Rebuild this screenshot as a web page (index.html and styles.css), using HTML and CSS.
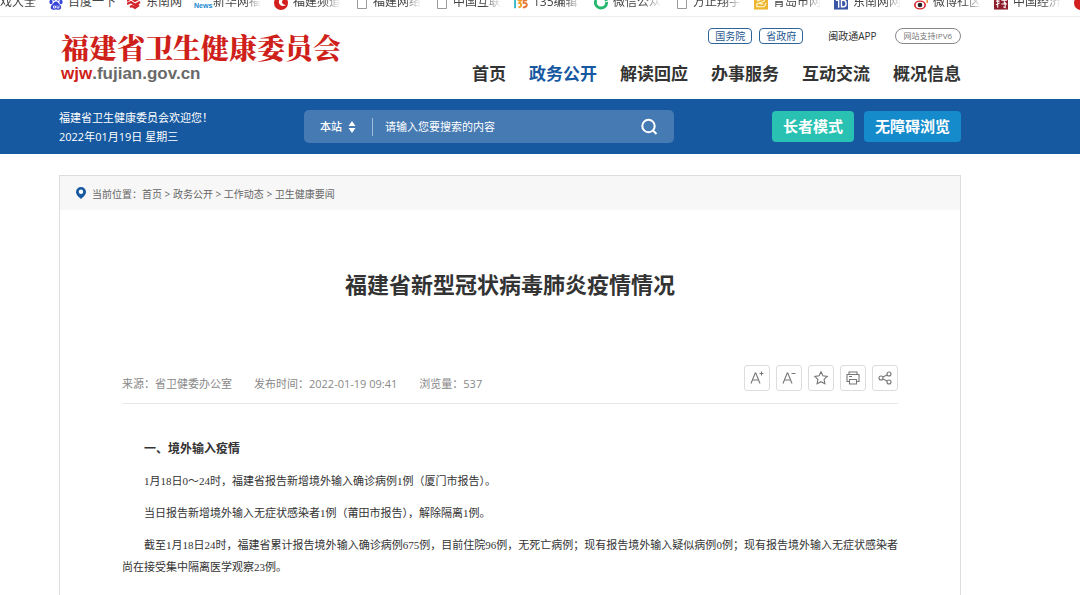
FILE: index.html
```html
<!DOCTYPE html>
<html lang="zh-CN">
<head>
<meta charset="utf-8">
<title>福建省新型冠状病毒肺炎疫情情况</title>
<link rel="stylesheet" href="styles.css">
</head>
<body>
<nav class="bookmarks" aria-label="书签">
  <a class="bm bm-first" href="#"><span>戏大全</span></a>
  <a class="bm bm-baidu" href="#"><svg viewBox="0 0 14 14"><g fill="#3a45d8"><ellipse cx="2" cy="6" rx="1.6" ry="2.2"/><ellipse cx="5" cy="2.6" rx="1.6" ry="2.2"/><ellipse cx="9" cy="2.6" rx="1.6" ry="2.2"/><ellipse cx="12" cy="6" rx="1.6" ry="2.2"/><path d="M7 5.500c2 0 2.500 2 4 3.300 2 1.700 1.500 5-1.200 5-1.300 0-1.800-.4-2.800-.4s-1.500.4-2.800.4C1.500 13.800 1 10.500 3 8.800 4.500 7.500 5 5.500 7 5.500z"/></g><path d="M4.500 10h2v2h-2zM8 9.500v2.500h2V9.500" fill="none" stroke="#fff" stroke-width=".8"/></svg><span>百度一下</span></a>
  <a class="bm bm-short" href="#"><svg viewBox="0 0 14 14" fill="none" stroke="#d3242b" stroke-width="2.200"><path d="M0 5l4-3 4 3 5-3M0 8l4-2 4 3 5-3M3 11l2-1 3 2 4-3"/></svg><span>东南网</span></a>
  <a class="bm" href="#"><svg class="news" viewBox="0 0 16 14"><text x="0" y="12">News</text></svg><span>新华网福</span></a>
  <a class="bm" href="#"><svg viewBox="0 0 14 14"><circle cx="7" cy="7" r="7" fill="#d3201f"/><path d="M12 2C7 1 4 4 5 7s4 4 7 2c-2 0-4-1-4-3s2-3 4-4z" fill="#fff"/></svg><span>福建频道</span></a>
  <a class="bm" href="#"><svg viewBox="0 0 14 14"><path d="M3.500.5h6l3 3v9h-9zM9.500.5v3h3" fill="#fff" stroke="#999"/></svg><span>福建网络</span></a>
  <a class="bm" href="#"><svg viewBox="0 0 14 14"><path d="M3.500.5h6l3 3v9h-9zM9.500.5v3h3" fill="#fff" stroke="#999"/></svg><span>中国互联</span></a>
  <a class="bm" href="#"><svg viewBox="0 0 16 14" fill="none" stroke-width="2.200"><path d="M1.200 2v11" stroke="#35b9c9"/><path d="M4 4h4L6 7c3 0 3 5-1 5" stroke="#efa32d"/><path d="M15 4h-4v3c5-1 5 5-1 5" stroke="#e5793b"/></svg><span>135编辑</span></a>
  <a class="bm" href="#"><svg viewBox="0 0 14 14" fill="none" stroke="#23b86c" stroke-width="2.800"><path d="M2 4c-2 4 1 8 5 8s6-3 5.500-6M3.500 2.500C7 0 11 1 12.500 5"/></svg><span>微信公众</span></a>
  <a class="bm" href="#"><svg viewBox="0 0 14 14"><path d="M3.500.5h6l3 3v9h-9zM9.500.5v3h3" fill="#fff" stroke="#999"/></svg><span>方正翔宇</span></a>
  <a class="bm" href="#"><svg viewBox="0 0 15 14"><path d="M0 0h15v14H0z" fill="#edb52d"/><path d="M3 5l8-3v3L3 8v3h8l2-4M6 8h4" fill="none" stroke="#fff6d5" stroke-width="1.200"/></svg><span>青岛市网</span></a>
  <a class="bm" href="#"><svg viewBox="0 0 15 14"><path d="M0 0h15v14H0z" fill="#3955a5"/><path d="M2 4h3v8M8 4v7h2c4 0 4-7 0-7z" fill="none" stroke="#fff" stroke-width="1.500"/></svg><span>东南网网</span></a>
  <a class="bm" href="#"><svg viewBox="0 0 14 14"><ellipse cx="6" cy="9" rx="6" ry="4.600" fill="#d9272d"/><ellipse cx="6" cy="9" rx="4.300" ry="3.300" fill="#fff"/><circle cx="6" cy="9" r="2.300" fill="#222"/><path d="M9 2c3-1 5 2 4 5" fill="none" stroke="#eb8c2c" stroke-width="1.500"/></svg><span>微博社区</span></a>
  <a class="bm" href="#"><svg viewBox="0 0 15 14"><path d="M0 0h15v14H0z" fill="#8d1c2c"/><path d="M2 5h4M4 2v10M2 9l4-2M8 4h6M11 2v6M8 8h6M12 6v6l-2-1" fill="none" stroke="#fff" stroke-width="1.100"/></svg><span>中国经济</span></a>
  <a class="bm" href="#" aria-label="书签"><svg viewBox="0 0 14 14"><circle cx="7" cy="7" r="7" fill="#d3201f"/><path d="M7 3l4 4-4 4" fill="none" stroke="#fff" stroke-width="2"/></svg></a>
</nav>

<header class="header wrap">
  <a class="logo" href="#"><span class="logo-name">福建省卫生健康委员会</span><span class="logo-url"><b>wjw</b>.fujian.gov.cn</span></a>
  <div class="header-side">
    <div class="quick">
      <a class="tag" href="#">国务院</a>
      <a class="tag" href="#">省政府</a>
      <a class="app" href="#">闽政通APP</a>
      <a class="ipv6" href="#">网站支持IPV6</a>
    </div>
    <nav class="menu" aria-label="主导航">
      <a href="#">首页</a><a class="active" href="#">政务公开</a><a href="#">解读回应</a><a href="#">办事服务</a><a href="#">互动交流</a><a href="#">概况信息</a>
    </nav>
  </div>
</header>

<div class="band wrap">
  <div class="welcome">福建省卫生健康委员会欢迎您！<br>2022年01月19日 星期三</div>
  <form class="search">
    <select class="scope" aria-label="搜索范围"><option>本站</option></select>
    <svg class="sort" viewBox="0 0 8 12" fill="#fff"><path d="M4 0l3.500 5h-7zM4 12L.5 7h7z"/></svg>
    <input class="keyword" type="text" placeholder="请输入您要搜索的内容" aria-label="搜索内容">
    <button class="go" type="button" aria-label="搜索"><svg viewBox="0 0 18 18" fill="none" stroke="#fff" stroke-width="2"><circle cx="8.500" cy="8" r="6.200"/><path d="M13 12.500l3.500 3.500"/></svg></button>
  </form>
  <div class="modes">
    <button class="mode elder" type="button">长者模式</button>
    <button class="mode access" type="button">无障碍浏览</button>
  </div>
</div>

<main class="main wrap">
  <div class="panel">
    <nav class="crumbs" aria-label="当前位置">
      <svg viewBox="0 0 10 12"><path d="M5 0a5 5 0 0 1 5 5c0 3-3 5-5 7-2-2-5-4-5-7a5 5 0 0 1 5-5z" fill="#1659a0"/><circle cx="5" cy="4.800" r="2.200" fill="#fff"/></svg>
      <span>当前位置：<a href="#">首页</a> &gt; <a href="#">政务公开</a> &gt; <a href="#">工作动态</a> &gt; <a href="#">卫生健康要闻</a></span>
    </nav>
    <article class="article">
      <h1>福建省新型冠状病毒肺炎疫情情况</h1>
      <div class="info">
        <div class="meta"><span>来源：省卫健委办公室</span><span>发布时间：2022-01-19 09:41</span><span>浏览量：537</span></div>
        <div class="tools">
          <button type="button" aria-label="放大字体"><svg viewBox="0 0 18 18"><path d="M3 14.500L7.200 4h.6L12 14.500M4.500 11h6M11.500 4.500h4M13.500 2.500v4"/></svg></button>
          <button type="button" aria-label="缩小字体"><svg viewBox="0 0 18 18"><path d="M3 14.500L7.200 4h.6L12 14.500M4.500 11h6M11.500 4.500h4"/></svg></button>
          <button type="button" aria-label="收藏"><svg viewBox="0 0 18 18"><path d="M9 2.800l1.900 4 4.300.6-3.100 3 .8 4.400L9 12.700l-3.900 2.100.8-4.400-3.100-3 4.300-.6z"/></svg></button>
          <button type="button" aria-label="打印"><svg viewBox="0 0 18 18"><path d="M5 5.500V3h8v2.500M5 12.500H3v-7h12v7h-2M5.500 10.500h7V15h-7zM5 7.500h3"/></svg></button>
          <button type="button" aria-label="分享"><svg viewBox="0 0 18 18"><circle cx="5" cy="9" r="2"/><circle cx="13" cy="5" r="2"/><circle cx="13" cy="13" r="2"/><path d="M7 8l4-2M7 10l4 2"/></svg></button>
        </div>
      </div>
      <div class="content">
        <h2>一、境外输入疫情</h2>
        <p>1月18日0～24时，福建省报告新增境外输入确诊病例1例（厦门市报告）。</p>
        <p>当日报告新增境外输入无症状感染者1例（莆田市报告），解除隔离1例。</p>
        <p>截至1月18日24时，福建省累计报告境外输入确诊病例675例，目前住院96例，无死亡病例；现有报告境外输入疑似病例0例；现有报告境外输入无症状感染者尚在接受集中隔离医学观察23例。</p>
      </div>
    </article>
  </div>
</main>
</body>
</html>
```
FILE: styles.css
```css
* { box-sizing: border-box; }
body {
  margin: 0;
  min-height: 100vh;
  display: flex;
  flex-direction: column;
  background: #fff;
  color: #333;
  font-family: "Open Sans", "Noto Sans CJK SC", sans-serif;
  font-size: 11px;
  overflow-x: hidden;
}
a { color: inherit; text-decoration: none; }
button, input, select { font: inherit; color: inherit; border: 0; background: none; padding: 0; margin: 0; }
svg { display: block; flex: none; }
.wrap { padding-left: 59px; padding-right: 119px; }

.bookmarks {
  display: flex;
  align-items: flex-end;
  height: 17px;
  padding-bottom: 6px;
  border-bottom: 1px solid #eee;
  overflow: hidden;
}
.bm { display: flex; align-items: flex-end; gap: 5px; flex: none; width: 80px; font-size: 12px; line-height: 16px; color: #444; }
.bm svg { width: 14px; height: 14px; }
.bm span {
  width: 48px;
  overflow: hidden;
  white-space: nowrap;
  -webkit-mask-image: linear-gradient(to right, #000 65%, transparent);
  mask-image: linear-gradient(to right, #000 65%, transparent);
}
.bm-first { width: 49px; }
.bm-baidu { width: 78px; }
.bm-baidu span, .bm-short span { -webkit-mask-image: none; mask-image: none; }
.bm-short { width: 67px; }
.bm .news { width: 16px; margin-right: -2px; overflow: visible; }
.news text { font: bold 7px "Liberation Sans", sans-serif; fill: #1586cf; }

.header { display: flex; justify-content: space-between; min-height: 82px; }
.logo { padding-top: 12px; padding-left: 2px; }
.logo-name { display: block; font: 900 28px/36px "Noto Serif CJK SC", "Noto Sans CJK SC", serif; color: #cf1f1a; }
.logo-url { display: block; font: bold 17px/18px "Liberation Sans", sans-serif; color: #6a6a6a; }
.logo-url b { color: #cf1f1a; }
.header-side { display: flex; flex-direction: column; align-items: flex-end; padding-top: 11px; }
.quick { display: flex; align-items: center; font-size: 10px; line-height: 14px; }
.tag { padding: 0 6px; border: 1px solid #2d6499; border-radius: 4px; color: #1c568f; margin-right: 7px; }
.app { margin: 0 18px; }
.ipv6 { padding: 0 8px; border: 1px solid #888; border-radius: 8px; font-size: 8px; color: #777; }
.menu { display: flex; gap: 23px; padding-top: 18px; font-size: 17px; line-height: 24px; font-weight: 700; }
.menu .active { color: #1659a0; }

.band { display: flex; align-items: center; min-height: 55px; background: #1659a0; color: #fff; }
.welcome { flex: none; width: 245px; line-height: 19px; }
.search { display: flex; align-items: center; flex: 0 1 370px; height: 33px; padding: 0 16px; border-radius: 5px; background: #467ab3; }
.scope { appearance: none; width: 28px; height: 20px; font-weight: 500; }
.sort { width: 8px; height: 12px; }
.keyword { flex: 1; min-width: 0; height: 18px; margin-left: 16px; padding-left: 12px; border-left: 1px solid #9dbad8; }
.keyword::placeholder { color: #fff; opacity: 1; }
.go svg { width: 18px; height: 18px; }
.modes { display: flex; gap: 10px; margin-left: auto; }
.mode { height: 31px; padding: 0 11px 2px; border-radius: 4px; font-size: 15px; font-weight: 700; }
.elder { background: #29c1b2; }
.access { background: #168bcb; }

.main { display: flex; flex: 1; padding-top: 21px; }
.panel { flex: 1; min-width: 0; border: 1px solid #ddd; border-bottom: 0; }
.crumbs { display: flex; align-items: center; gap: 6px; height: 34px; padding: 0 16px; background: #f7f7f7; color: #666; font-size: 10px; }
.crumbs svg { width: 10px; height: 12px; }
.article { padding: 58px 62px 16px; }
h1 { margin: 0 0 65px; text-align: center; font-size: 22px; line-height: 32px; font-weight: 700; }
.info { display: flex; justify-content: space-between; align-items: flex-end; padding-bottom: 12px; border-bottom: 1px solid #e8e8e8; }
.meta { display: flex; gap: 22px; line-height: 14px; color: #888; }
.tools { display: flex; gap: 6px; }
.tools button { display: grid; place-items: center; width: 26px; height: 26px; border: 1px solid #ddd; border-radius: 3px; }
.tools svg { width: 18px; height: 18px; fill: none; stroke: #777; stroke-width: 1.1; }
.content { padding-top: 34px; font-family: "Liberation Serif", "Noto Sans CJK SC", serif; line-height: 22px; text-align: justify; }
.content h2 { margin: 0 0 10px; text-indent: 22px; font-size: 12px; }
.content p { margin: 0 0 10px; text-indent: 22px; }
```
